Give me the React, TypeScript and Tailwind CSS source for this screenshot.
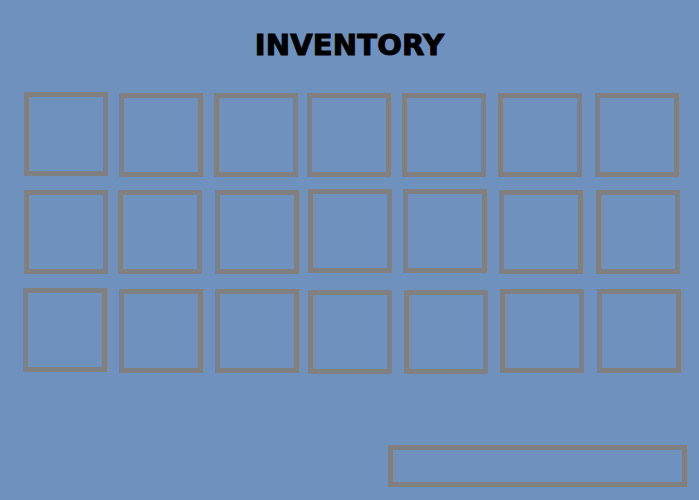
import React from "react";

const box = "shrink-0 w-[84px] h-[84px] border-[5px] border-[#808080] box-border";

export default function App() {
  return (
    <div className="w-[699px] h-[500px] bg-[#6f91bd] overflow-hidden flex flex-col">
      <h1
        className="pt-[31px] text-center text-[29px] leading-[29px] font-bold text-black tracking-[0.2px] [-webkit-text-stroke:1px_#000]"
        style={{ fontFamily: '"DejaVu Sans", Verdana, sans-serif' }}
      >
        INVENTORY
      </h1>

      <div className="mt-[32px] flex items-start h-[85px]">
        <div className={`${box} ml-[24px] mt-0`} />
        <div className={`${box} ml-[11px] mt-[1px]`} />
        <div className={`${box} ml-[11px] mt-[1px]`} />
        <div className={`${box} ml-[9px] mt-[1px]`} />
        <div className={`${box} ml-[11px] mt-[1px]`} />
        <div className={`${box} ml-[12px] mt-[1px]`} />
        <div className={`${box} ml-[13px] mt-[1px]`} />
      </div>

      <div className="mt-[12px] flex items-start h-[85px]">
        <div className={`${box} ml-[24px] mt-[1px]`} />
        <div className={`${box} ml-[10px] mt-[1px]`} />
        <div className={`${box} ml-[13px] mt-[1px]`} />
        <div className={`${box} ml-[9px] mt-0`} />
        <div className={`${box} ml-[11px] mt-0`} />
        <div className={`${box} ml-[12px] mt-[1px]`} />
        <div className={`${box} ml-[13px] mt-[1px]`} />
      </div>

      <div className="mt-[14px] flex items-start h-[86px]">
        <div className={`${box} ml-[23px] mt-0`} />
        <div className={`${box} ml-[12px] mt-[1px]`} />
        <div className={`${box} ml-[12px] mt-[1px]`} />
        <div className={`${box} ml-[9px] mt-[2px]`} />
        <div className={`${box} ml-[12px] mt-[2px]`} />
        <div className={`${box} ml-[12px] mt-[1px]`} />
        <div className={`${box} ml-[13px] mt-[1px]`} />
      </div>

      <div className="mt-[71px] flex">
        <div className="ml-[388px] w-[299px] h-[42px] border-[5px] border-[#808080] box-border" />
      </div>
    </div>
  );
}
